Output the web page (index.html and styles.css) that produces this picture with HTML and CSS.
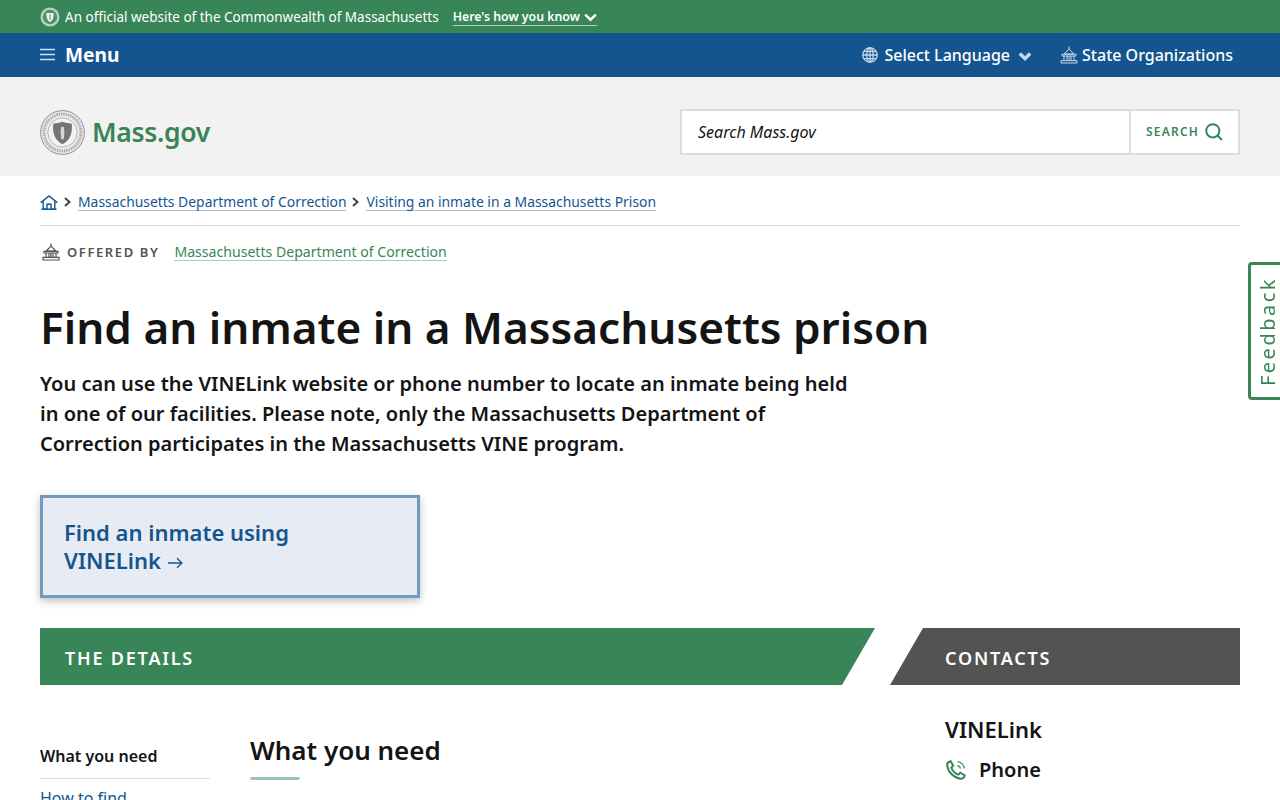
FILE: index.html
```html
<!DOCTYPE html>
<html lang="en">

<head>
  <meta charset="UTF-8" />
  <meta name="viewport" content="width=device-width, initial-scale=1.0" />
  <title>Find an inmate in a Massachusetts prison | Mass.gov</title>
  <link rel="stylesheet" href="styles.css">
</head>

<body>
  <div class="official-bar">
    <svg class="official-seal" viewBox="0 0 20 20" width="20" height="20">
      <circle cx="10" cy="10" r="9.5" fill="#b9d4c3" />
      <circle cx="10" cy="10" r="7.2" fill="#4d9069" />
      <path d="M6.4 6 L13.6 6 C14 10.5 12.6 13.6 10 15.2 C7.4 13.6 6 10.5 6.4 6 Z" fill="#eef4f0" />
      <path d="M9.3 7.4 h1.4 v5.4 h-1.4 Z" fill="#6fa586" />
    </svg>
    <span class="official-text">An official website of the Commonwealth of Massachusetts</span>
    <a class="official-link" href="#">Here's how you know
      <svg viewBox="0 0 13 9" width="13" height="9">
        <path d="M1.2 1.6 L6.5 6.6 L11.8 1.6" fill="none" stroke="#fff" stroke-width="2.6" />
      </svg>
    </a>
  </div>

  <nav class="util-nav">
    <a class="menu-btn" href="#">
      <svg viewBox="0 0 15 13" width="15" height="13">
        <path d="M0 1.5 H15 M0 6.5 H15 M0 11.5 H15" stroke="#cfe0ee" stroke-width="1.4" fill="none" />
      </svg>
      <span>Menu</span>
    </a>
    <div class="util-right">
      <a class="util-item lang" href="#">
        <svg viewBox="0 0 16 16" width="16" height="16" fill="none" stroke="#c5d8e9" stroke-width="1.3">
          <circle cx="8" cy="8" r="7.2" />
          <ellipse cx="8" cy="8" rx="3.3" ry="7.2" />
          <path d="M8 .8 V15.2 M.8 8 H15.2 M1.8 4.4 H14.2 M1.8 11.6 H14.2" />
        </svg>
        <span>Select Language</span>
        <svg class="lang-caret" viewBox="0 0 14 9" width="14" height="9">
          <path d="M1.8 1.6 L7 6.6 L12.2 1.6" fill="none" stroke="#c5d8e9" stroke-width="3.4" />
        </svg>
      </a>
      <a class="util-item" href="#">
        <svg viewBox="0 0 18 18" width="18" height="18" fill="none" stroke="#c5d8e9" stroke-width="1">
          <path d="M9 .5 V3 M4.2 8 L9 3 L13.8 8 Z M2 8.2 H16 V10 H2 Z M4 10 V14.5 M7 10 V14.5 M9 10 V14.5 M11 10 V14.5 M14 10 V14.5 M1 14.7 H17 V17 H1 Z" />
        </svg>
        <span>State Organizations</span>
      </a>
    </div>
  </nav>

  <header class="site-header">
    <a class="logo" href="#">
      <svg class="logo-seal" viewBox="0 0 46 46" width="45" height="45">
        <circle cx="23" cy="23" r="22.4" fill="#e6e6e6" stroke="#8f8f8f" stroke-width="1" />
        <circle cx="23" cy="23" r="18.8" fill="#ececec" stroke="#a8a8a8" stroke-width="3" stroke-dasharray="1.4 1" />
        <circle cx="23" cy="23" r="15" fill="#f1f1f1" stroke="#9a9a9a" stroke-width="0.7" />
        <path d="M13.5 14 C17 13 20 13.6 23 12 C26 13.6 29 13 32.5 14 C33.5 24 30.5 31 23 35 C15.5 31 12.5 24 13.5 14 Z" fill="#757575" />
        <path d="M21.6 18 C21.6 16.8 24.4 16.8 24.4 18 L25 23 L24.2 30 H21.8 L21 23 Z" fill="#d8d8d8" />
      </svg>
      <span>Mass.gov</span>
    </a>
    <form class="search-box">
      <input class="search-input" type="text" placeholder="Search Mass.gov" />
      <button class="search-btn" type="button">
        <span>SEARCH</span>
        <svg viewBox="0 0 18 18" width="18" height="18" fill="none" stroke="#388557" stroke-width="2">
          <circle cx="7.8" cy="7.8" r="6.6" />
          <path d="M12.5 12.5 L17 17" />
        </svg>
      </button>
    </form>
  </header>

  <main class="page">
    <div class="breadcrumbs">
      <a class="crumb-home" href="#">
        <svg viewBox="0 0 18 15" width="18" height="15" fill="none" stroke="#14558f" stroke-width="1.4">
          <path d="M.7 7.6 L9 1 L17.3 7.6 M3.2 6.4 V14 H7 V9.2 H11 V14 H14.8 V6.4 M1.5 14.2 H16.5" />
        </svg>
      </a>
      <svg class="crumb-sep" viewBox="0 0 7 10" width="7" height="10">
        <path d="M1 1 L5.5 5 L1 9" fill="none" stroke="#444" stroke-width="2" />
      </svg>
      <a class="crumb" href="#">Massachusetts Department of Correction</a>
      <svg class="crumb-sep" viewBox="0 0 7 10" width="7" height="10">
        <path d="M1 1 L5.5 5 L1 9" fill="none" stroke="#444" stroke-width="2" />
      </svg>
      <a class="crumb" href="#">Visiting an inmate in a Massachusetts Prison</a>
    </div>

    <div class="offered">
      <svg viewBox="0 0 18 18" width="18" height="18" fill="none" stroke="#535353" stroke-width="1.2">
        <path d="M9 .5 V3 M4.2 8 L9 3 L13.8 8 Z" />
        <path d="M2 8.4 H16 V10 H2 Z M4 10 V14 M7 10 V14 M9 10 V14 M11 10 V14 M14 10 V14 M1 14.4 H17 V17 H1 Z" />
      </svg>
      <span class="offered-label">OFFERED BY</span>
      <a class="offered-link" href="#">Massachusetts Department of Correction</a>
    </div>

    <h1 class="page-title">Find an inmate in a Massachusetts prison</h1>
    <p class="lede">You can use the VINELink website or phone number to locate an inmate being held in one of our facilities. Please note, only the Massachusetts Department of Correction participates in the Massachusetts VINE program.</p>

    <a class="callout" href="#">
      <span class="callout-text">Find an inmate using VINELink
        <svg class="callout-arrow" viewBox="0 0 15 12" width="15" height="12" fill="none" stroke="#14558f" stroke-width="1.3">
          <path d="M0 6 H14 M9 1.2 L14 6 L9 10.8" />
        </svg>
      </span>
    </a>

    <div class="band-row">
      <div class="band band-details"><h2>THE DETAILS</h2></div>
      <div class="band band-contacts"><h2>CONTACTS</h2></div>
    </div>

    <div class="content-row">
      <aside class="side-nav">
        <div class="side-current">What you need</div>
        <a class="side-link" href="#">How to find</a>
      </aside>
      <section class="details">
        <h2 class="section-title">What you need</h2>
        <div class="title-rule"></div>
      </section>
      <section class="contacts">
        <h3 class="contact-name">VINELink</h3>
        <div class="contact-row">
          <svg viewBox="0 0 22 22" width="22" height="22" fill="none" stroke="#388557" stroke-width="2">
            <path d="M5.6 2.2 L8.2 6.6 L6.3 8.6 C7 11.4 10.3 14.8 13.3 15.6 L15.3 13.7 L19.8 16.4 C19.4 18.4 17.6 20 15.6 19.8 C9 19 3 13 2.2 6.6 C2 4.4 3.6 2.6 5.6 2.2 Z" />
            <path d="M12.4 6.4 C14 6.7 15.2 8 15.6 9.6 M12.6 2.6 C16 3 18.9 5.9 19.4 9.4" stroke-width="1.3" />
          </svg>
          <span>Phone</span>
        </div>
      </section>
    </div>
  </main>

  <a class="feedback-tab" href="#"><span>Feedback</span></a>
</body>

</html>
```

FILE: styles.css
```css
html {
  overflow: hidden;
}

body {
  font-family: "Noto Sans", Arial, sans-serif;
  color: #141414;
  background: #fff;
  margin: 0;
  padding: 0;
}

a {
  text-decoration: none;
}

.official-bar {
  display: flex;
  align-items: center;
  height: 33px;
  padding: 1px 40px 0;
  box-sizing: border-box;
  background: #388557;
  color: #fff;
  font-size: 13.5px;
}

.official-seal {
  margin-right: 5px;
}

.official-link {
  display: flex;
  align-items: center;
  gap: 4px;
  margin-left: 14px;
  margin-top: 1px;
  color: #fff;
  font-size: 12.3px;
  font-weight: 600;
  line-height: 16px;
  border-bottom: 1.5px solid #b5d3c0;
}

.util-nav {
  display: flex;
  justify-content: space-between;
  align-items: center;
  height: 44px;
  padding: 0 47px 0 40px;
  background: #14558f;
}

.menu-btn {
  display: flex;
  align-items: center;
  gap: 10px;
  padding-bottom: 1px;
  color: #fff;
  font-size: 19.2px;
  font-weight: 700;
}

.util-right {
  display: flex;
  align-items: center;
  gap: 28px;
}

.util-item {
  display: flex;
  align-items: center;
  gap: 4px;
  color: #fff;
  font-size: 16px;
  font-weight: 500;
}

.lang {
  gap: 6px;
}

.lang-caret {
  margin-left: 2px;
  margin-top: 3px;
}

.site-header {
  display: flex;
  justify-content: space-between;
  align-items: center;
  height: 99px;
  padding: 10px 40px 0;
  box-sizing: border-box;
  background: #f2f2f2;
}

.logo {
  display: flex;
  align-items: center;
  gap: 7px;
  color: #388557;
  font-size: 26.5px;
  font-weight: 600;
  letter-spacing: -0.3px;
}

.logo-seal {
  margin-top: 2px;
}

.search-box {
  display: flex;
  width: 560px;
  height: 46px;
  box-sizing: border-box;
  border: 2px solid #dcdcdc;
  background: #fff;
}

.search-input {
  flex: 1;
  min-width: 0;
  border: 0;
  outline: 0;
  padding: 0 16px;
  font-family: inherit;
  font-size: 16px;
  font-style: italic;
  background: transparent;
}

.search-input::placeholder {
  color: #141414;
  opacity: 1;
}

.search-btn {
  display: flex;
  align-items: center;
  gap: 6px;
  width: 109px;
  padding: 0 0 0 15px;
  box-sizing: border-box;
  border: 0;
  border-left: 2px solid #dcdcdc;
  background: #fff;
  color: #388557;
  font-family: inherit;
  font-size: 12px;
  font-weight: 600;
  letter-spacing: 1.2px;
}

.page {
  padding: 0 40px;
}

.breadcrumbs {
  display: flex;
  align-items: center;
  height: 50px;
  padding-top: 3px;
  box-sizing: border-box;
  border-bottom: 1px solid #dcdcdc;
  font-size: 13.9px;
}

.crumb-home {
  display: flex;
}

.crumb-sep {
  margin: 0 7px 0 6px;
}

.crumb {
  margin-right: 3px;
  color: #14558f;
  line-height: 17px;
  border-bottom: 1px solid #a2bbd2;
}

.crumb + .crumb-sep {
  margin-left: 3px;
}

.offered {
  display: flex;
  align-items: center;
  height: 52px;
  padding-left: 2px;
  font-size: 14.1px;
}

.offered-label {
  margin-left: 7px;
  color: #535353;
  font-size: 13px;
  font-weight: 600;
  letter-spacing: 1.6px;
}

.offered-link {
  margin-left: 15px;
  color: #388557;
  line-height: 17px;
  border-bottom: 1px solid #a6cbb4;
}

.page-title {
  margin: 22px 0 0;
  font-size: 44.1px;
  font-weight: 600;
  line-height: 54px;
}

.lede {
  width: 820px;
  margin: 15px 0 0;
  font-size: 20.03px;
  font-weight: 600;
  line-height: 30px;
}

.callout {
  display: block;
  box-sizing: border-box;
  width: 380px;
  height: 103px;
  margin-top: 36px;
  padding: 20px 100px 0 21px;
  background: #e7ecf4;
  border: 3px solid #7299c0;
  box-shadow: 0 3px 8px rgba(0, 0, 0, 0.25);
  color: #14558f;
  font-size: 22px;
  font-weight: 600;
  line-height: 28px;
}

.callout-arrow {
  margin-left: 1px;
}

.band-row {
  display: flex;
  justify-content: space-between;
  margin-top: 30px;
}

.band {
  display: flex;
  align-items: center;
  height: 57px;
  padding-top: 2px;
  box-sizing: border-box;
  color: #fff;
}

.band h2 {
  margin: 0;
  font-size: 18px;
  font-weight: 600;
  letter-spacing: 1.8px;
}

.band-details {
  width: 835px;
  padding-left: 25px;
  background: #388557;
  clip-path: polygon(0 0, 100% 0, 802px 100%, 0 100%);
}

.band-contacts {
  width: 350px;
  padding-left: 55px;
  background: #535353;
  clip-path: polygon(33px 0, 100% 0, 100% 100%, 0 100%);
}

.content-row {
  display: flex;
  padding-top: 33px;
}

.side-nav {
  width: 170px;
  margin-right: 40px;
  padding-top: 21px;
  font-size: 16px;
}

.side-current {
  padding: 6px 0 11px;
  font-weight: 600;
  line-height: 22px;
  border-bottom: 1px solid #dcdcdc;
}

.side-link {
  display: block;
  padding-top: 8px;
  color: #14558f;
}

.details {
  width: 655px;
  padding-top: 14px;
}

.section-title {
  margin: 0;
  font-size: 26px;
  font-weight: 600;
  line-height: 36px;
}

.title-rule {
  width: 50px;
  height: 3px;
  margin-top: 9px;
  background: #9ec4ae;
  clip-path: polygon(0 0, 100% 0, 98% 100%, 2% 100%);
}

.contacts {
  width: 295px;
  margin-left: 40px;
  margin-top: -2px;
}

.contact-name {
  margin: 0;
  font-size: 22px;
  font-weight: 600;
  line-height: 26px;
}

.contact-row {
  display: flex;
  align-items: center;
  gap: 12px;
  margin-top: 14px;
  font-size: 20px;
  font-weight: 600;
  line-height: 28px;
}

.feedback-tab {
  position: fixed;
  top: 262px;
  right: 0;
  display: flex;
  align-items: center;
  justify-content: center;
  box-sizing: border-box;
  width: 32px;
  height: 138px;
  padding: 2px 0 0 3px;
  background: #fff;
  border: 3px solid #388557;
  border-right: 0;
  border-radius: 4px 0 0 4px;
  color: #388557;
  font-size: 20px;
  letter-spacing: 2.5px;
}

.feedback-tab span {
  writing-mode: vertical-rl;
  transform: rotate(180deg);
}
```
